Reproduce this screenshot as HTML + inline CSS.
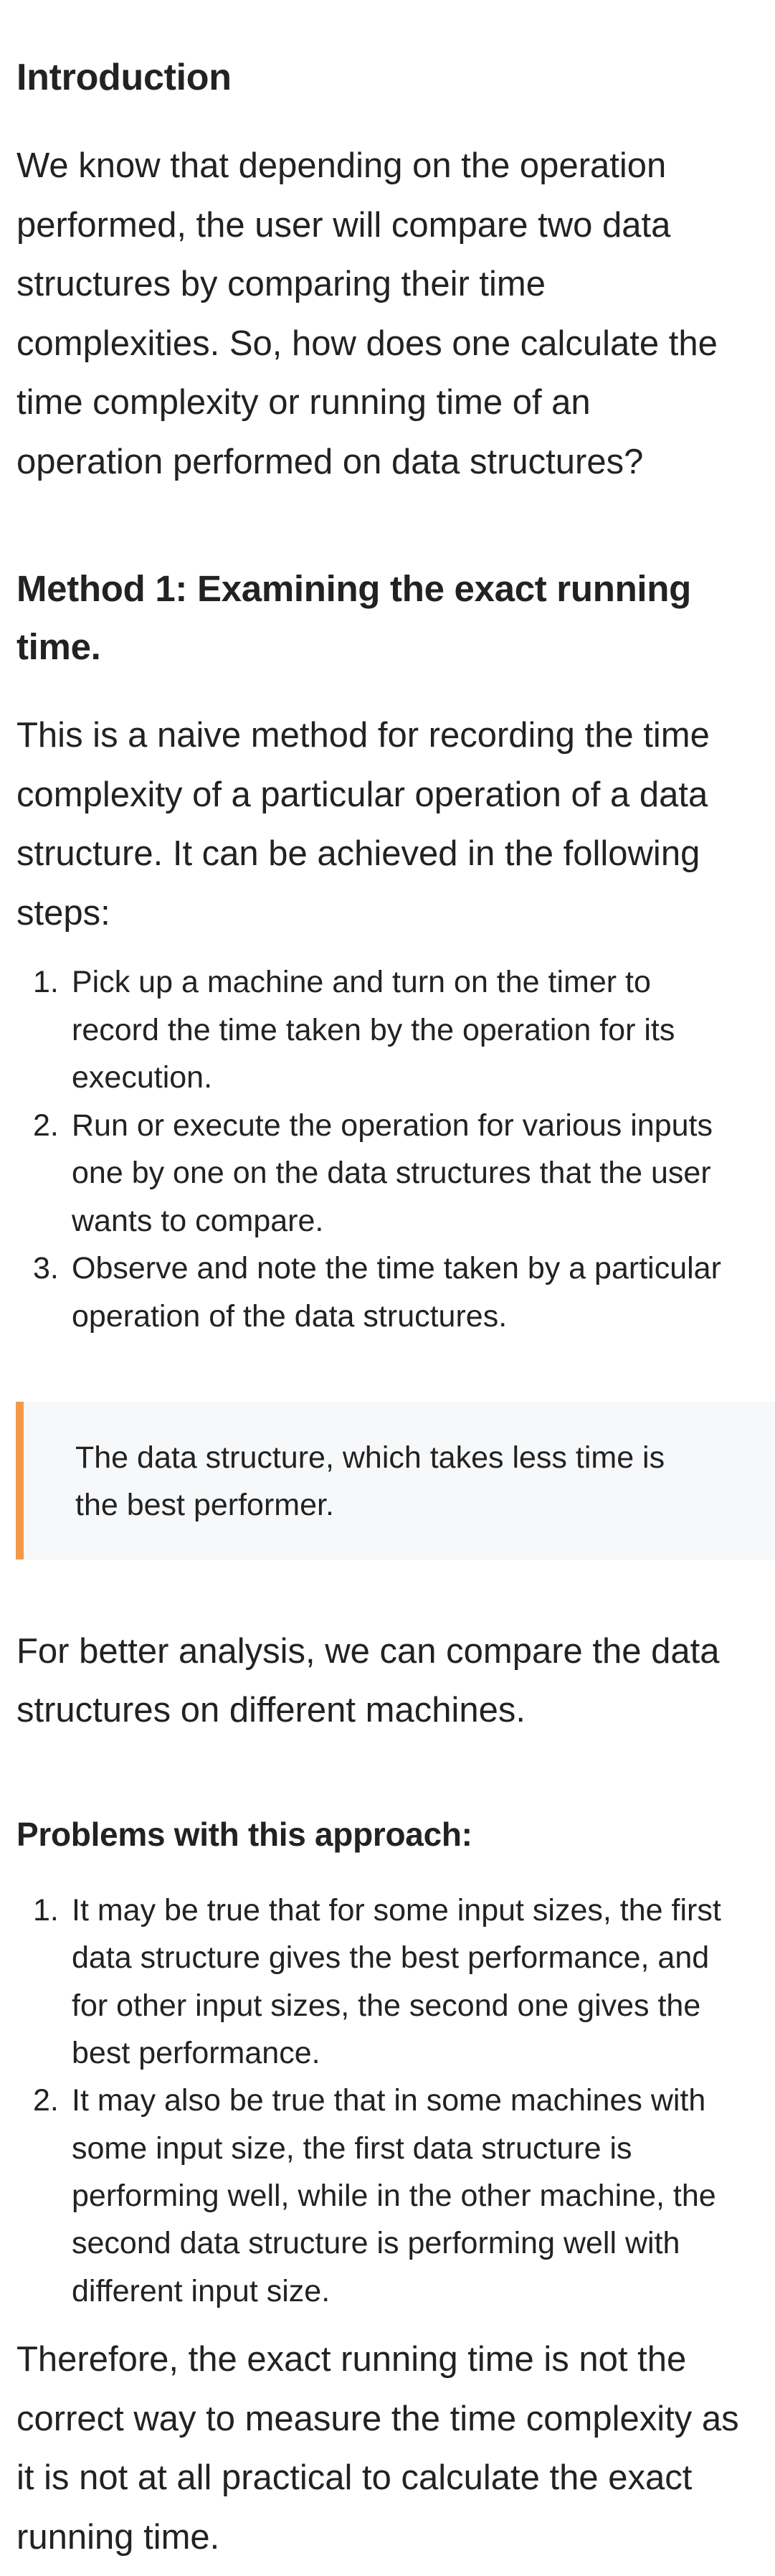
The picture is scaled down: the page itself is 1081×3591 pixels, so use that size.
<!DOCTYPE html>
<html><head><meta charset="utf-8"><style>
html,body{margin:0;padding:0;background:#fff;}
body{width:1081px;height:3591px;position:relative;overflow:hidden;font-family:"Liberation Sans",Arial,sans-serif;color:#222;}
.l{position:absolute;white-space:nowrap;}
.p{font-size:49px;line-height:84px;height:84px;left:23px;}
.li{font-size:43px;line-height:66px;height:66px;left:100px;}
.n{font-size:43px;line-height:66px;height:66px;left:46px;}
.h{font-weight:bold;left:23px;letter-spacing:-0.3px;}
.bq{position:absolute;left:22px;top:1954px;width:1059px;height:220px;background:#f7f8fa;border-left:11px solid #f39a4a;box-sizing:border-box;}
</style></head><body>
<div class="l h" style="top:73px;font-size:52px;line-height:70px;">Introduction</div>

<div class="l p" style="top:189px">We know that depending on the operation</div>
<div class="l p" style="top:272px">performed, the user will compare two data</div>
<div class="l p" style="top:354px">structures by comparing their time</div>
<div class="l p" style="top:437px">complexities. So, how does one calculate the</div>
<div class="l p" style="top:519px">time complexity or running time of an</div>
<div class="l p" style="top:602px">operation performed on data structures?</div>

<div class="l h" style="top:780px;font-size:51px;line-height:82px;">Method 1: Examining the exact running</div>
<div class="l h" style="top:861px;font-size:51px;line-height:82px;">time.</div>

<div class="l p" style="top:983px">This is a naive method for recording the time</div>
<div class="l p" style="top:1066px">complexity of a particular operation of a data</div>
<div class="l p" style="top:1148px">structure. It can be achieved in the following</div>
<div class="l p" style="top:1231px">steps:</div>

<div class="l n" style="top:1336px">1.</div>
<div class="l li" style="top:1336px">Pick up a machine and turn on the timer to</div>
<div class="l li" style="top:1403px">record the time taken by the operation for its</div>
<div class="l li" style="top:1469px">execution.</div>
<div class="l n" style="top:1536px">2.</div>
<div class="l li" style="top:1536px">Run or execute the operation for various inputs</div>
<div class="l li" style="top:1602px">one by one on the data structures that the user</div>
<div class="l li" style="top:1669px">wants to compare.</div>
<div class="l n" style="top:1735px">3.</div>
<div class="l li" style="top:1735px">Observe and note the time taken by a particular</div>
<div class="l li" style="top:1802px">operation of the data structures.</div>

<div class="bq"></div>
<div class="l li" style="top:1999px;left:105px">The data structure, which takes less time is</div>
<div class="l li" style="top:2065px;left:105px">the best performer.</div>

<div class="l p" style="top:2260px">For better analysis, we can compare the data</div>
<div class="l p" style="top:2342px">structures on different machines.</div>

<div class="l h" style="top:2527px;font-size:46px;line-height:60px;">Problems with this approach:</div>

<div class="l n" style="top:2630px">1.</div>
<div class="l li" style="top:2630px">It may be true that for some input sizes, the first</div>
<div class="l li" style="top:2696px">data structure gives the best performance, and</div>
<div class="l li" style="top:2763px">for other input sizes, the second one gives the</div>
<div class="l li" style="top:2829px">best performance.</div>
<div class="l n" style="top:2895px">2.</div>
<div class="l li" style="top:2895px">It may also be true that in some machines with</div>
<div class="l li" style="top:2962px">some input size, the first data structure is</div>
<div class="l li" style="top:3028px">performing well, while in the other machine, the</div>
<div class="l li" style="top:3094px">second data structure is performing well with</div>
<div class="l li" style="top:3161px">different input size.</div>

<div class="l p" style="top:3247px">Therefore, the exact running time is not the</div>
<div class="l p" style="top:3330px">correct way to measure the time complexity as</div>
<div class="l p" style="top:3412px">it is not at all practical to calculate the exact</div>
<div class="l p" style="top:3495px">running time.</div>
</body></html>
